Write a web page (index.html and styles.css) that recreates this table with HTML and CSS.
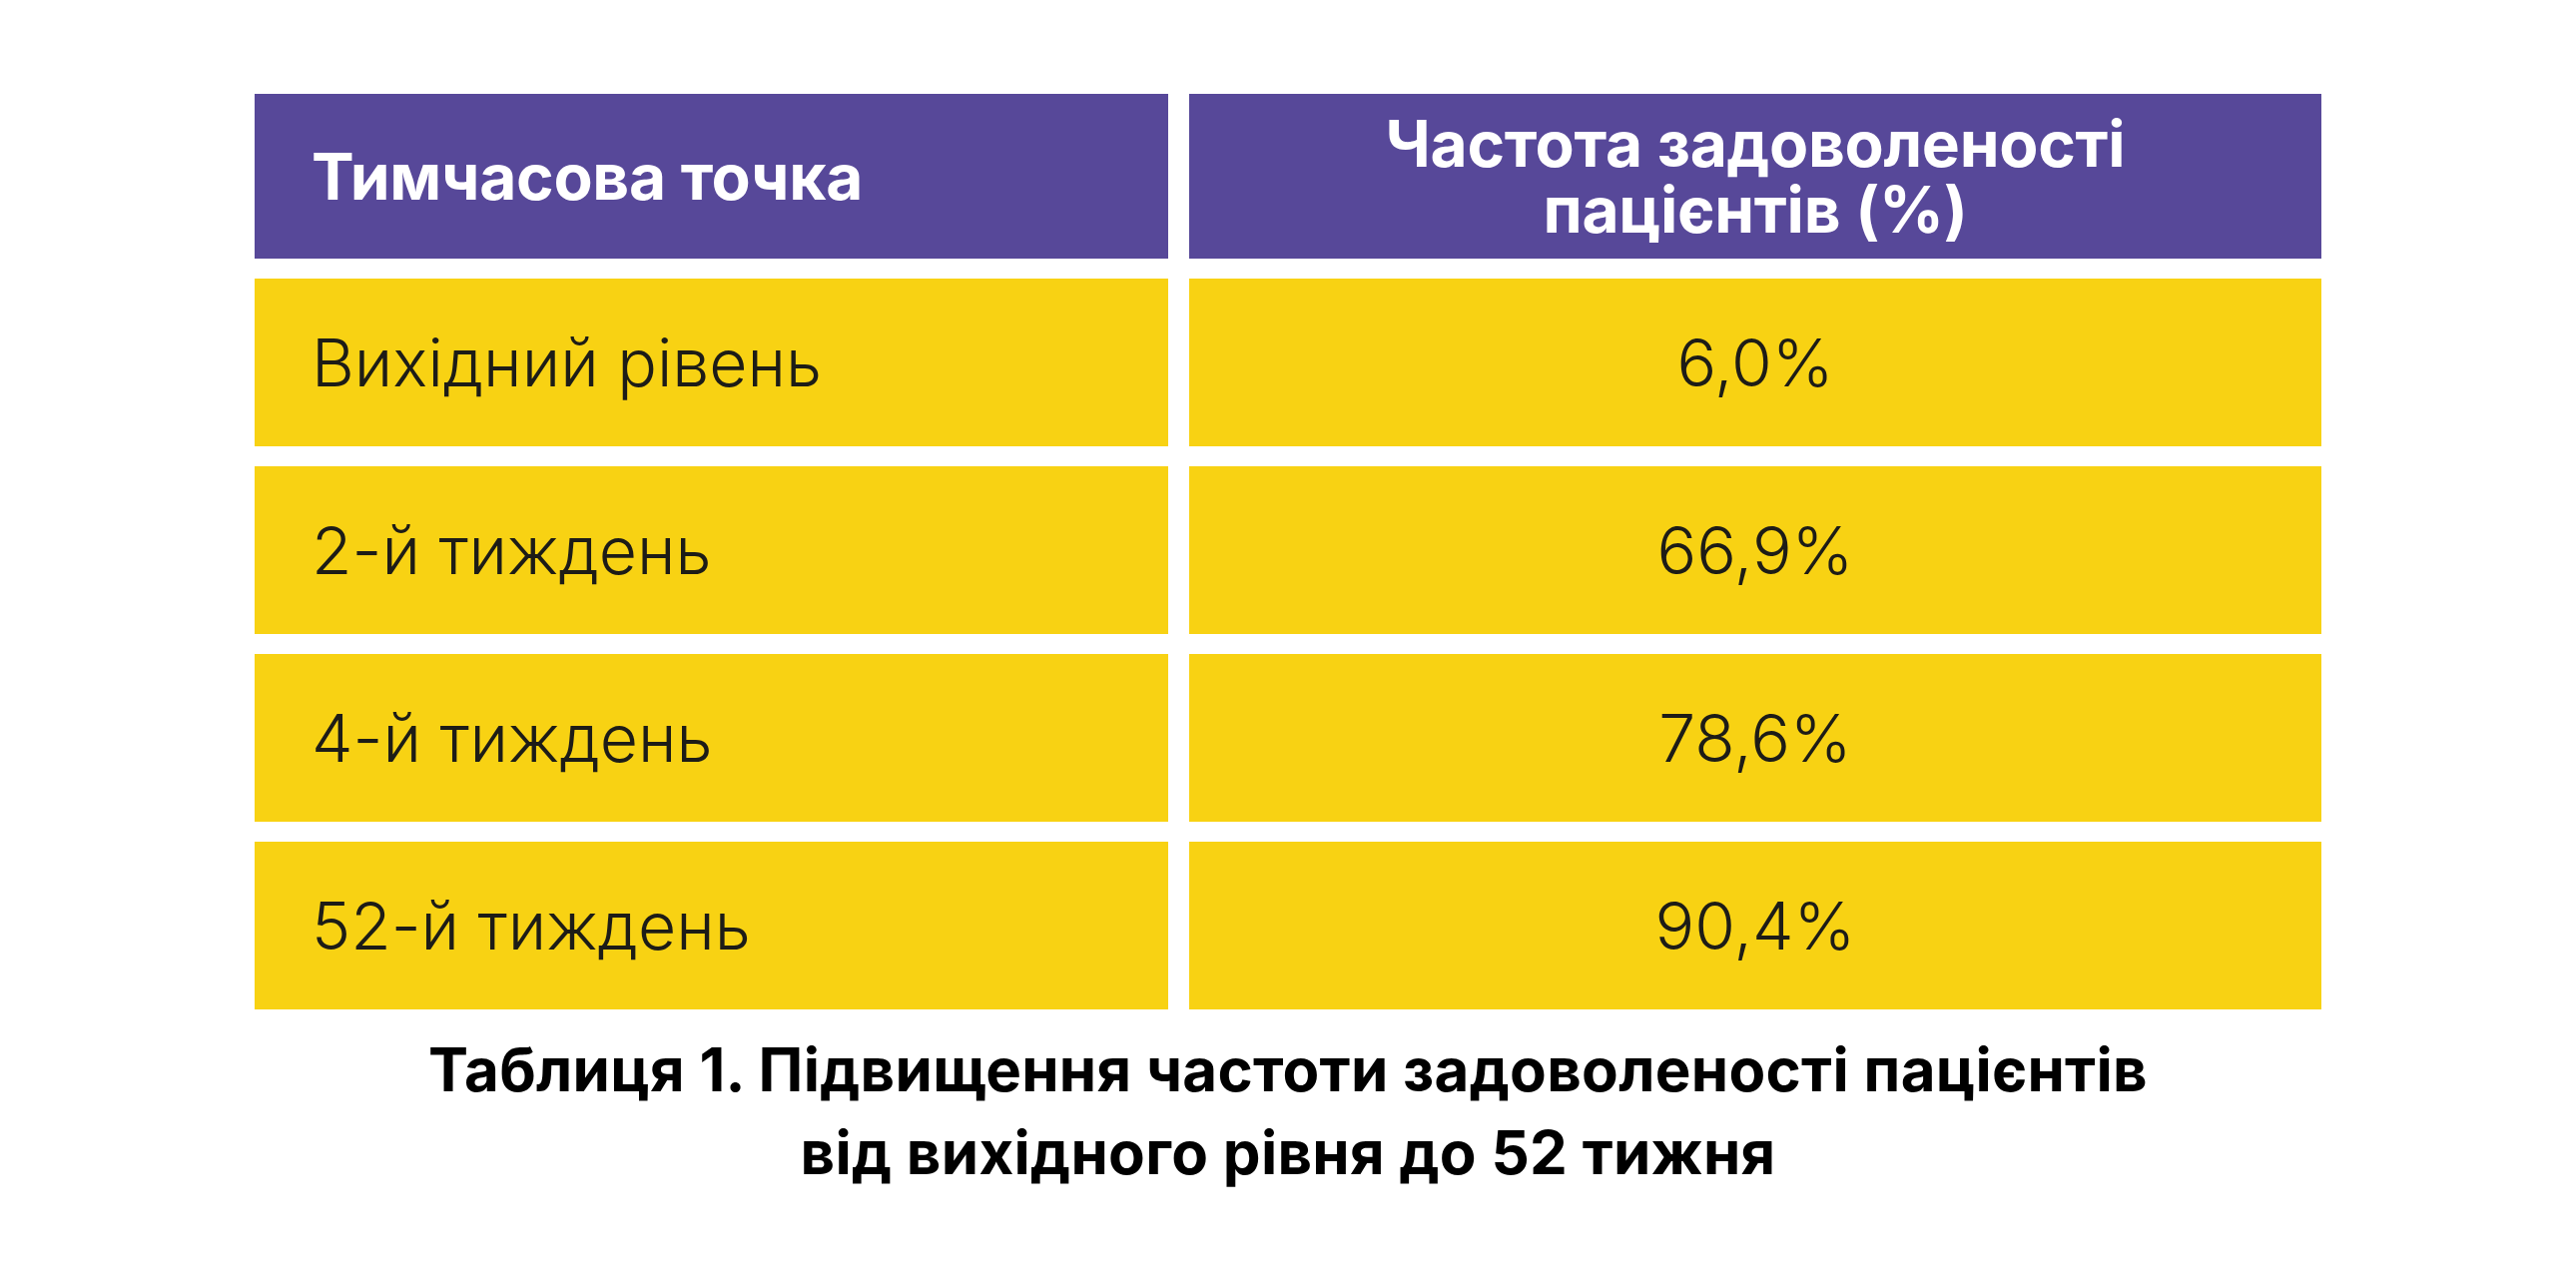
FILE: index.html
```html
<!DOCTYPE html>
<html lang="uk">
<head>
<meta charset="utf-8">
<title>Таблиця 1</title>
<link rel="stylesheet" href="styles.css">
</head>
<body>
<main class="page">
  <div class="table">
    <div class="cell head left">Тимчасова точка</div>
    <div class="cell head right">Частота задоволеності<br>пацієнтів (%)</div>
    <div class="cell left">Вихідний рівень</div>
    <div class="cell right">6,0%</div>
    <div class="cell left">2-й тиждень</div>
    <div class="cell right">66,9%</div>
    <div class="cell left">4-й тиждень</div>
    <div class="cell right">78,6%</div>
    <div class="cell left">52-й тиждень</div>
    <div class="cell right">90,4%</div>
  </div>
  <p class="caption">Таблиця 1. Підвищення частоти задоволеності пацієнтів<br>від вихідного рівня до 52 тижня</p>
</main>
</body>
</html>
```

FILE: styles.css
```css
html, body {
  margin: 0;
  padding: 0;
  background: #ffffff;
}

body {
  font-family: Inter, "Noto Sans", sans-serif;
  width: 2580px;
  height: 1288px;
  overflow: hidden;
}

.page {
  display: flex;
  flex-direction: column;
  align-items: center;
  padding-top: 94px;
}

.table {
  display: grid;
  grid-template-columns: 915px 1134px;
  grid-template-rows: 165px repeat(4, 168px);
  column-gap: 21px;
  row-gap: 20px;
}

.cell {
  display: flex;
  align-items: center;
  background: #f8d213;
  color: #1d1c17;
  font-size: 66px;
  font-weight: 300;
  letter-spacing: 0;
}

.cell.left {
  padding-left: 57px;
}

.cell.right {
  justify-content: center;
  text-align: center;
}

.cell.head {
  background: #574899;
  color: #ffffff;
  font-weight: 700;
  font-size: 64px;
  line-height: 66px;
  letter-spacing: -0.3px;
}

.caption {
  margin: 19px 0 0;
  text-align: center;
  font-weight: 700;
  font-size: 60px;
  line-height: 83px;
  color: #000000;
  letter-spacing: 0.3px;
}
```
